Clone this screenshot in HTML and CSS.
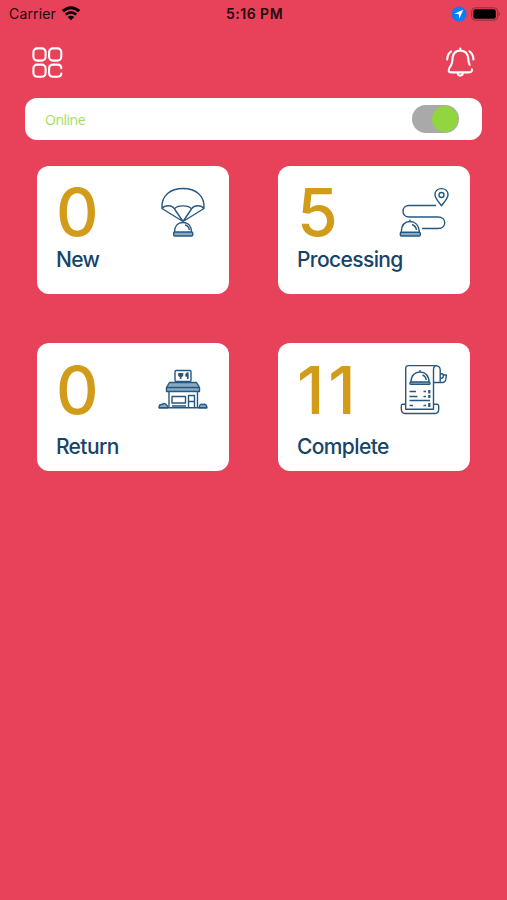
FILE: index.html
```html
<!DOCTYPE html>
<html lang="en">
<head>
<meta charset="utf-8">
<meta name="viewport" content="width=device-width">
<title>Orders</title>
<link rel="stylesheet" href="styles.css">
</head>
<body>
<header class="status">
  <div class="carrier">Carrier
    <svg class="wifi" width="20" height="16" viewBox="0 0 20 16"><path d="M1.8 5.1Q10-1.7 18.2 5.1" stroke-width="3"/><path d="M4.7 8.6Q10 4.2 15.3 8.6" stroke-width="2.6"/><path class="dot" d="M6.7 11Q10 8.5 13.3 11L10 14.3Z"/></svg>
  </div>
  <time>5:16 PM</time>
  <div class="indicators">
    <svg width="16" height="16" viewBox="0 0 16 16"><circle cx="8" cy="8" r="7.5" fill="#087df5"/><path d="M12.3 3.7 3.3 7.7 7.8 8.2 8.3 12.7Z" fill="#fff"/></svg>
    <svg width="30" height="14" viewBox="0 0 30 14"><rect x=".7" y=".8" width="26" height="12.4" rx="3.5" fill="none" stroke="#912a3b"/><rect x="2.4" y="2.3" width="22.4" height="9.4" rx="2" fill="#000"/><path d="M27.7 4.9Q30.3 7 27.7 9.1Z" fill="#912a3b"/></svg>
  </div>
</header>
<nav class="toolbar">
  <svg class="line" width="32" height="32" viewBox="0 0 32 32" stroke-width="2.1"><rect x="2.4" y="1.4" width="12.2" height="12.2" rx="3.8"/><rect x="18.1" y="1.4" width="12.2" height="12.2" rx="3.8"/><rect x="2.4" y="17.6" width="12.2" height="12.2" rx="3.8"/><path d="M30.3 21.2C30.3 18.6 28.8 17.6 26.3 17.6H22.1C19.6 17.6 18.1 19.1 18.1 21.6V25.8C18.1 28.3 19.6 29.8 22.1 29.8H26.3C28.8 29.8 30.3 28.8 30.3 26.6"/></svg>
  <svg class="line" width="30" height="32" viewBox="0 0 30 32" stroke-width="2.1"><path d="M24.6 18.8C23.2 16.5 23.6 13 22.8 10C21.7 6.4 18.8 4.6 15.3 4.6C11.2 4.6 8.3 7.3 7.7 11.2C7.2 15 7.6 17.8 5.5 20.2C2.8 23.6 3.3 26.4 6 26.4H24C26.3 26.4 27.2 25.4 26.9 23.2M15.3 2.6V4.6M12.7 27C13 30.5 17.6 30.5 17.9 27M2.2 13.5C2.3 9.8 3.6 7 6.1 5.3M28.4 13.5C28.3 9.8 27 7 24.5 5.3"/></svg>
</nav>
<main>
  <section class="online"><span>Online</span><div class="switch"><i class="knob"></i></div></section>
  <div class="cards">
    <article class="card">
      <b class="count">0</b>
      <svg class="icon" viewBox="0 0 60 60"><path d="M7 26.5C6 13 16 6.5 28 6.5S50 13 49 26.5L28 39.5ZM7 26.5C10 22.8 17 22.8 19.5 27C22 22.8 34 22.8 36.5 27C39 22.8 46 22.8 49 26.5M19.5 27 28 39.5 36.5 27M19.5 50C19.5 44.5 22.5 40.5 28 40.5S36.5 44.5 36.5 50M30 43Q34 44 34.3 48"/><rect class="tint" x="18.7" y="50" width="19" height="4" rx="1"/></svg>
      <h2>New</h2>
    </article>
    <article class="card">
      <b class="count">5</b>
      <svg class="icon" viewBox="0 0 60 60"><path d="M41 23.5H14C6 23.5 6 35 14 35H43C52 35 52 46.5 43 46.5H27M46.5 23.8C43 19 40 16.5 40 12.8C40 4.5 53 4.5 53 12.8C53 16.5 50 19 46.5 23.8ZM6.2 50C6.6 42.8 10 39.5 15 39.5S24 43 24.3 50M15 37.5V39.5M17 42.5Q21 44 21.5 48"/><circle cx="46.5" cy="13" r="2.5"/><rect class="tint" x="5.3" y="50.2" width="20" height="3.8" rx="1.2"/></svg>
      <h2>Processing</h2>
    </article>
    <article class="card lower">
      <b class="count">0</b>
      <svg class="icon" viewBox="0 0 60 60"><rect x="20" y="10.5" width="16" height="11" rx="1.2"/><path d="M24 13V15.5Q25.7 17.5 27.4 15.5V13M25.7 13V19M32.8 13Q30.5 14 31.2 16H32.8ZM32.8 16V19" stroke-width="1.7"/><path class="tint" d="M14.5 22.5H41.5L44.5 27.5V31.5H11.5V27.5Z"/><path d="M14 32V47M42.5 32V47M12 27.5H44M17 36.5H30.5V43H17ZM33.5 47V35.5H39.5V47M33.5 41.5H39.5M4 47.8H52M17 46H31"/><path class="tint" d="M4 47.8Q4 44 7 44.5Q10 42 12.5 46V47.8H4ZM44 47.8Q45 43 48 44.5Q51.5 43.5 52 47.8Z"/></svg>
      <h2>Return</h2>
    </article>
    <article class="card lower">
      <b class="count eleven">11</b>
      <svg class="icon" viewBox="0 0 60 60"><path d="M10.7 45V8.5Q10.7 5.6 13.5 5.6H40Q45.2 5.6 45.2 10V22.5H38.5M38.5 44V10Q38.5 6 41.5 5.6M45.2 22.5H48Q51.3 22.2 51.3 15H48.5M45.2 13.8H47Q48.5 14 48.3 16.5Q48 18.5 45.2 18.5M10.7 44.2H7.5Q6.3 44.2 6.3 46V48.5Q6.3 53.5 10 53.5H40Q43.7 53.5 43.7 49V46Q43.7 44.2 42 44.2H38.5V49.2H10.7V44.2"/><path d="M16 22C16 15.5 20 12 25 12S34 15.5 34 22M25 10V12M27.5 15Q31 16.5 31.2 20"/><rect class="tint" x="15" y="22" width="20" height="2.4" rx="1"/><path d="M14.5 31.5H21M28.5 31.5H31M14.5 36.5H22.5M28.5 36.5H31M14.5 40.5H35M14.5 45.5H18M28.5 45.5H31"/><path d="M34.3 30V33.5M34.3 35V38M34.3 43V47" stroke-width="2.2"/></svg>
      <h2>Complete</h2>
    </article>
  </div>
</main>
</body>
</html>
```
FILE: styles.css
```css
* { box-sizing: border-box; }
body { margin: 0; min-height: 100vh; background: #e8415a; font-family: Inter, sans-serif; }
svg { display: block; flex: none; }
.status { display: grid; grid-template-columns: 1fr auto 1fr; align-items: center; height: 27px; padding: 0 6px 0 8px; color: #20090d; font-size: 14px; }
.carrier { display: flex; align-items: center; gap: 5px; padding-left: 1px; letter-spacing: .15px; }
.wifi path { fill: none; stroke: #000; }
.wifi .dot { fill: #000; stroke: none; }
.status time { font-weight: 600; letter-spacing: .5px; }
.indicators { display: flex; justify-content: flex-end; align-items: center; gap: 4px; }
.toolbar { display: flex; justify-content: space-between; padding: 19px 32px 0 31px; height: 71px; }
.toolbar svg { margin-top: 1px; }
.toolbar svg:last-child { margin-top: 0; }
.line { fill: none; stroke: #fff; stroke-linecap: round; stroke-linejoin: round; }
.online { display: flex; align-items: center; justify-content: space-between; height: 42px; margin: 0 25px; padding: 0 23px 0 20px; border-radius: 12px; background: #fff; color: #a4dc63; font: 400 14px "Open Sans", sans-serif; letter-spacing: -.5px; }
.switch { display: flex; align-items: center; justify-content: flex-end; width: 47px; height: 28px; padding: 1px; border-radius: 14px; background: #a8a9a8; }
.knob { width: 26px; height: 26px; border-radius: 50%; background: #93d53e; }
.cards { display: grid; grid-template-columns: 192px 192px; gap: 49px; margin: 26px 37.4px 0; }
.card { display: grid; grid-template-columns: 1fr 60px; grid-template-rows: 60px 24px; row-gap: 6px; height: 128px; padding: 16px 14.5px 0 18.5px; border-radius: 12px; background: #fff; }
.card:nth-child(even) { padding-right: 15.5px; }
.card.lower { padding-top: 17px; row-gap: 15px; }
.count { color: #d19c1a; font-size: 66px; line-height: 60px; font-weight: 500; }
.count.eleven { letter-spacing: 4px; }
.icon { width: 60px; height: 60px; fill: none; stroke: #255880; stroke-width: 1.4; stroke-linejoin: round; }
.icon .tint { fill: #88a9c2; }
.card h2 { grid-column: 1 / -1; margin: 0; color: #164468; font-size: 21px; line-height: 24px; font-weight: 500; letter-spacing: -.6px; }
```
